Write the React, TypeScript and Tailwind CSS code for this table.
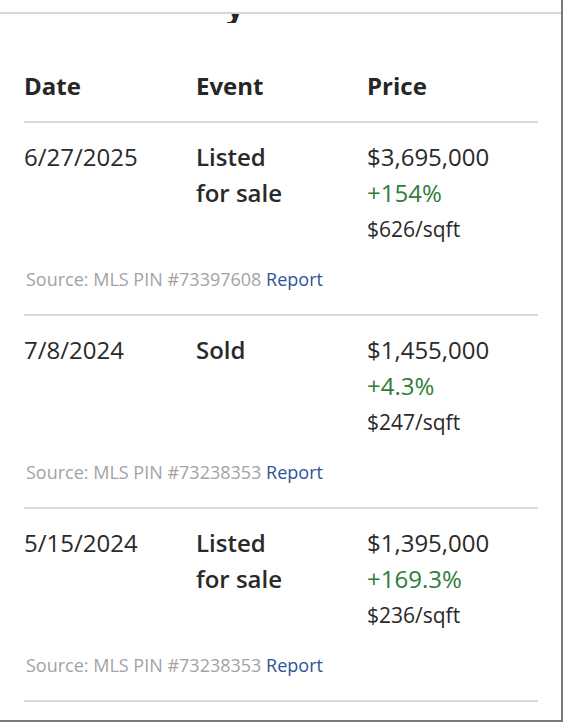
import React from "react";

type Row = { date: string; event: string[]; price: string; change: string; sqft: string; source: string };

const rows: Row[] = [
  { date: "6/27/2025", event: ["Listed", "for sale"], price: "$3,695,000", change: "+154%", sqft: "$626/sqft", source: "73397608" },
  { date: "7/8/2024", event: ["Sold"], price: "$1,455,000", change: "+4.3%", sqft: "$247/sqft", source: "73238353" },
  { date: "5/15/2024", event: ["Listed", "for sale"], price: "$1,395,000", change: "+169.3%", sqft: "$236/sqft", source: "73238353" },
];

export default function App() {
  return (
    <div
      className="w-[563px] h-[722px] bg-white overflow-hidden border-r-2 border-b-2 border-[#7a7a7a] flex flex-col"
      style={{ fontFamily: '"Open Sans", "Noto Sans", sans-serif' }}
    >
      <div className="h-[14px] shrink-0 border-b-2 border-[#d6d6d6] bg-white" />
      <div className="h-[9px] shrink-0 overflow-hidden">
        <div className="ml-[226px] -mt-[25px] text-[32px] leading-[34px] font-bold text-[#262626]">y</div>
      </div>
      <div className="px-[24px] pr-[23px]">
        <div className="grid grid-cols-[172px_171px_1fr] items-center h-[100px] border-b-2 border-[#d9d9d9] text-[24px] font-bold text-[#262626] pt-[28px]">
          <div>Date</div>
          <div>Event</div>
          <div>Price</div>
        </div>
        {rows.map((r, i) => (
          <div key={i} className="border-b-2 border-[#d9d9d9] pt-[16px] pb-[22px]">
            <div className="grid grid-cols-[172px_171px_1fr] text-[24px] leading-[36px] text-[#2a2a2a]">
              <div>{r.date}</div>
              <div className="font-semibold">
                {r.event.map((e, j) => (
                  <div key={j}>{e}</div>
                ))}
              </div>
              <div>
                <div>{r.price}</div>
                <div className="text-[#2e7d3a]">{r.change}</div>
                <div className="text-[21px]">{r.sqft}</div>
              </div>
            </div>
            <div className="mt-[20px] text-[18px] leading-[25px] text-[#a3a3a3] pl-[2px]">
              Source: MLS PIN #{r.source} <span className="text-[#2c5597] font-medium">Report</span>
            </div>
          </div>
        ))}
      </div>
    </div>
  );
}
